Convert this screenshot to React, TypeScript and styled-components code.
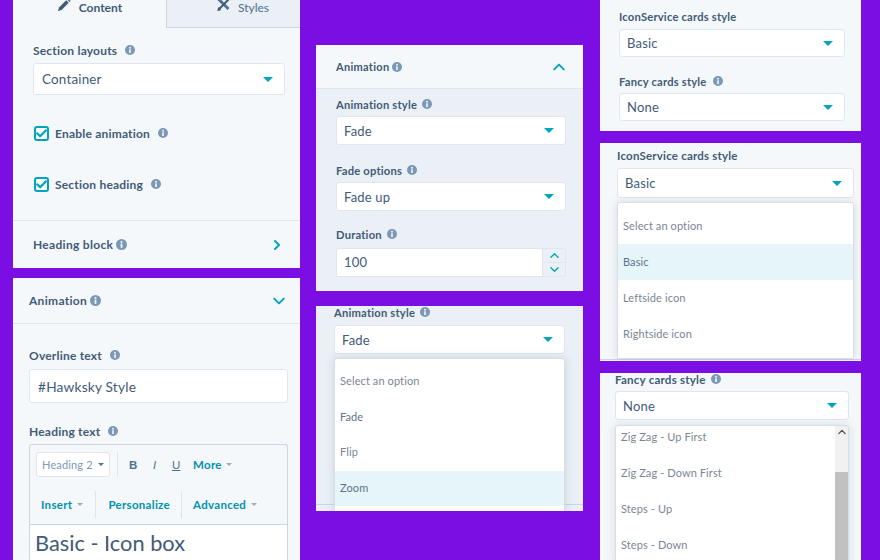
import React from "react";
import styled, { createGlobalStyle } from "styled-components";

const Global = createGlobalStyle`
  html, body { margin: 0; padding: 0; background: #7a0ee3; }
  body { font-family: "Lato", "Open Sans", sans-serif; color: #33475b; }
`;
const Page = styled.div`
  width: 880px; height: 560px; overflow: hidden; display: flex; padding-left: 13px;
  box-sizing: border-box; background: #7a0ee3;
`;
const Column = styled.div<{ $w: number; $ml?: number; $top?: number; $gap: number }>`
  width: ${p => p.$w}px; margin-left: ${p => p.$ml ?? 0}px; padding-top: ${p => p.$top ?? 0}px;
  display: flex; flex-direction: column; gap: ${p => p.$gap}px; flex: none;
`;
const Panel = styled.section<{ $h: number; $tint?: boolean; $rule?: number }>`
  height: ${p => p.$h}px; flex: none; overflow: hidden; box-sizing: border-box;
  background-color: ${p => (p.$tint ? "#eaf0f6" : "#f5f8fa")};
  ${p => (p.$rule ? `background-image: linear-gradient(#cbd6e2, #cbd6e2); background-repeat: no-repeat; background-size: 100% 1px; background-position: 0 ${p.$rule}px;` : "")}
`;
const Tabs = styled.div` display: flex; height: 28px; box-sizing: border-box; `;
const Tab = styled.div<{ $active?: boolean }>`
  flex: ${p => (p.$active ? "0 0 153px" : "1")}; box-sizing: border-box; display: flex; align-items: flex-start; justify-content: center;
  gap: 8px; padding-left: ${p => (p.$active ? 0 : 19)}px; font-size: 12px; line-height: 16px;
  font-weight: ${p => (p.$active ? 700 : 400)}; color: ${p => (p.$active ? "#425b76" : "#516f90")};
  background: ${p => (p.$active ? "#f5f8fa" : "#eaf0f6")};
  ${p => (p.$active ? "" : "border-left: 1px solid #cbd6e2; border-bottom: 1px solid #cbd6e2;")}
  svg { flex: none; }
`;
const Body = styled.div<{ $pt: number; $pl: number; $pr: number }>`
  padding: ${p => p.$pt}px ${p => p.$pr}px 0 ${p => p.$pl}px;
`;
const Label = styled.div<{ $mt?: number; $gap?: number; $size?: number }>`
  display: flex; align-items: center; gap: ${p => p.$gap ?? 8}px; height: 14px; margin-top: ${p => p.$mt ?? 0}px;
  font-size: ${p => p.$size ?? 12}px; font-weight: 700; color: #425b76; letter-spacing: 0.2px; white-space: nowrap;
`;
const InfoDot = styled.svg<{ $s?: number }>`
  width: ${p => p.$s ?? 10}px; height: ${p => p.$s ?? 10}px; flex: none;
`;
const Info = ({ s }: { s?: number }) => (
  <InfoDot $s={s} viewBox="0 0 10 10">
    <circle cx="5" cy="5" r="5" fill="#7c98b6" />
    <rect x="4.2" y="4.3" width="1.6" height="3.7" fill="#f5f8fa" />
    <circle cx="5" cy="2.8" r="0.95" fill="#f5f8fa" />
  </InfoDot>
);
const SelectBox = styled.div<{ $mt?: number; $h: number; $size?: number; $pl?: number }>`
  height: ${p => p.$h}px; margin-top: ${p => p.$mt ?? 6}px; box-sizing: border-box; display: flex; align-items: center;
  justify-content: space-between; background: #fff; border: 1px solid #dfe6ef; border-radius: 3px;
  padding: 0 11px 0 ${p => p.$pl ?? 7}px; font-size: ${p => p.$size ?? 13}px; color: #425b76; letter-spacing: 0.2px;
`;
const Caret = styled.span`
  width: 0; height: 0; border-left: 5px solid transparent; border-right: 5px solid transparent;
  border-top: 5px solid #00a4bd; flex: none;
`;
const CheckRow = styled.div<{ $mt: number }>`
  display: flex; align-items: center; margin-top: ${p => p.$mt}px; height: 16px; padding-left: 1px;
`;
const CheckBox = styled.span`
  width: 15px; height: 15px; box-sizing: border-box; border: 2px solid #00a4bd; border-radius: 3px; background: #fff;
  display: flex; align-items: center; justify-content: center; margin-right: 6px; flex: none;
`;
const Divider = styled.div<{ $mt?: number }>` height: 1px; background: #dfe3eb; margin-top: ${p => p.$mt ?? 0}px; `;
const Header = styled.div<{ $h: number; $pl: number; $pr: number; $line?: boolean }>`
  height: ${p => p.$h}px; box-sizing: border-box; display: flex; align-items: center; justify-content: space-between;
  padding: 0 ${p => p.$pr}px 0 ${p => p.$pl}px; background: #f5f8fa;
  ${p => (p.$line ? "border-bottom: 1px solid #dfe3eb;" : "")}
`;
const HeadTitle = styled.div<{ $size?: number }>`
  display: flex; align-items: center; gap: 3px; font-size: ${p => p.$size ?? 12}px; font-weight: 700; color: #425b76; letter-spacing: 0.3px;
`;
const Chevron = ({ dir, s = 10, w = 2, c = "#00a4bd" }: { dir: "up" | "down" | "right"; s?: number; w?: number; c?: string }) => {
  const d = dir === "up" ? "M1 7 L5 3 L9 7" : dir === "down" ? "M1 3 L5 7 L9 3" : "M3 1 L7 5 L3 9";
  return (
    <svg width={s} height={s} viewBox="0 0 10 10" fill="none">
      <path d={d} stroke={c} strokeWidth={w} strokeLinecap="round" strokeLinejoin="round" />
    </svg>
  );
};
const Editor = styled.div`
  margin-top: 6px; border: 1px solid #cbd6e2; border-bottom: none; background: #f5f8fa; border-radius: 3px 3px 0 0;
`;
const ToolRow = styled.div<{ $h: number; $pl: number }>`
  height: ${p => p.$h}px; box-sizing: border-box; display: flex; align-items: center; padding-left: ${p => p.$pl}px;
`;
const HeadingSelect = styled.div`
  width: 74px; height: 25px; box-sizing: border-box; background: #fff; border: 1px solid #dfe3eb; border-radius: 3px;
  display: flex; align-items: center; justify-content: space-between; padding: 0 5px 0 5px; font-size: 11px; color: #7c98b6; letter-spacing: .15px;
`;
const SmallCaret = styled.span<{ $c?: string; $ml?: number }>`
  width: 0; height: 0; border-left: 3px solid transparent; border-right: 3px solid transparent;
  border-top: 3px solid ${p => p.$c ?? "#99acc2"}; margin-left: ${p => p.$ml ?? 0}px; flex: none;
`;
const ToolSep = styled.span<{ $ml: number; $mr: number; $h: number }>`
  width: 1px; height: ${p => p.$h}px; background: #dfe3eb; margin: 0 ${p => p.$mr}px 0 ${p => p.$ml}px; flex: none;
`;
const FormatBtn = styled.span<{ $w: number; $i?: boolean; $u?: boolean; $b?: boolean }>`
  width: ${p => p.$w}px; font-size: 11.5px; color: #516f90; font-weight: ${p => (p.$b ? 900 : 400)};
  font-style: ${p => (p.$i ? "italic" : "normal")}; text-decoration: ${p => (p.$u ? "underline" : "none")}; font-family: "Liberation Sans", sans-serif;
`;
const ToolLink = styled.span`
  font-size: 11.5px; font-weight: 700; color: #0091ae; letter-spacing: 0.3px; white-space: nowrap;
`;
const EditorContent = styled.div`
  background: #fff; border-top: 1px solid #cbd6e2; height: 40px; padding: 3px 0 0 5px; font-size: 21.8px; line-height: 30px;
  font-weight: 400; color: #425b76; white-space: nowrap;
`;
const Stepper = styled.div`
  display: flex; margin-top: 7px; height: 29px; border: 1px solid #dfe6ef; border-radius: 3px; overflow: hidden; box-sizing: border-box;
`;
const StepperValue = styled.div`
  flex: 1; background: #fff; font-size: 13px; color: #425b76; padding: 0 0 1px 7px; display: flex; align-items: center; letter-spacing: .2px;
`;
const StepButtons = styled.div`
  width: 22px; display: flex; flex-direction: column; background: #eaf0f6; border-left: 1px solid #dfe6ef;
`;
const StepBtn = styled.div`
  flex: 1; display: flex; align-items: center; justify-content: center;
  & + & { border-top: 1px solid #dfe6ef; }
`;
const Menu = styled.div<{ $h: number; $mt: number; $pt?: number }>`
  margin-top: ${p => p.$mt}px; height: ${p => p.$h}px; box-sizing: border-box; background: #fff; padding-top: ${p => p.$pt ?? 0}px;
  border: 1px solid #d5deea; border-radius: 3px 3px 0 0; box-shadow: 0 0 10px rgba(66, 91, 118, .18); overflow: hidden; display: flex;
`;
const OptionList = styled.div<{ $scroll?: number }>` flex: 1; min-width: 0; margin-top: ${p => -(p.$scroll ?? 0)}px; `;
const Option = styled.div<{ $h: number; $active?: boolean; $muted?: boolean }>`
  height: ${p => p.$h}px; box-sizing: border-box; display: flex; align-items: center; padding: 0 0 2px 5px; font-size: 11px; letter-spacing: .1px;
  color: ${p => (p.$muted ? "#7a8694" : "#5f7288")}; background: ${p => (p.$active ? "#e5f5f8" : "transparent")};
`;
const ScrollBar = styled.div` width: 13px; flex: none; background: #c1c1c1; display: flex; flex-direction: column; `;
const ScrollTrack = styled.div`
  height: 46px; background: #f1f1f1; display: flex; justify-content: center; padding-top: 2px; box-sizing: border-box;
`;

const Pencil = () => (
  <svg width="14" height="14" viewBox="0 0 14 14" style={{ marginTop: -2 }}>
    <path d="M1 13 L2 9.4 L9.2 2.2 L11.8 4.8 L4.6 12 Z" fill="#425b76" />
    <path d="M10 1.4 L11 .4 L13.6 3 L12.6 4 Z" fill="#425b76" />
  </svg>
);
const Tools = () => (
  <svg width="13" height="13" viewBox="0 0 14 14" style={{ marginTop: -2 }}>
    <path d="M1 .5 L2.6 0 L13.4 10.8 L11.4 13 L.6 2.4 Z" fill="#516f90" />
    <path d="M12.4 0 L14 1.6 L4.4 11.2 L3.6 13.4 L.4 14 L1 10.6 L3 9.6 Z" fill="#425b76" />
  </svg>
);
const Tick = () => (
  <svg width="11" height="9" viewBox="0 0 11 9" fill="none">
    <path d="M1.2 4.4 L4.2 7.2 L9.8 1.4" stroke="#00a4bd" strokeWidth="2.2" strokeLinecap="round" strokeLinejoin="round" />
  </svg>
);

export default function App() {
  return (
    <>
      <Global />
      <Page>
        <Column $w={287} $gap={10}>
          <Panel $h={268}>
            <Tabs>
              <Tab $active><Pencil />Content</Tab>
              <Tab><Tools />Styles</Tab>
            </Tabs>
            <Body $pt={15} $pl={20} $pr={15}>
              <Label>Section layouts <Info /></Label>
              <SelectBox $h={32} $size={13.4} $pl={8}>Container <Caret /></SelectBox>
              <CheckRow $mt={30}><CheckBox><Tick /></CheckBox><Label>Enable animation <Info /></Label></CheckRow>
              <CheckRow $mt={35}><CheckBox><Tick /></CheckBox><Label>Section heading <Info /></Label></CheckRow>
            </Body>
            <Divider $mt={28} />
            <Header $h={47} $pl={20} $pr={18}>
              <HeadTitle>Heading block <Info s={11} /></HeadTitle>
              <Chevron dir="right" />
            </Header>
          </Panel>
          <Panel $h={290}>
            <Header $h={46} $pl={16} $pr={15} $line>
              <HeadTitle>Animation <Info s={11} /></HeadTitle>
              <Chevron dir="down" s={12} w={1.6} />
            </Header>
            <Body $pt={24} $pl={16} $pr={12}>
              <Label>Overline text <Info /></Label>
              <SelectBox $h={34} $mt={7} $size={13.7} $pl={8}>#Hawksky Style</SelectBox>
              <Label $mt={21}>Heading text <Info /></Label>
              <Editor>
                <ToolRow $h={39} $pl={6}>
                  <HeadingSelect>Heading 2 <SmallCaret $c="#516f90" /></HeadingSelect>
                  <ToolSep $ml={7} $mr={11} $h={25} />
                  <FormatBtn $w={24} $b>B</FormatBtn>
                  <FormatBtn $w={19} $i>I</FormatBtn>
                  <FormatBtn $w={21} $u>U</FormatBtn>
                  <ToolLink>More</ToolLink>
                  <SmallCaret $ml={4} />
                </ToolRow>
                <ToolRow $h={40} $pl={11}>
                  <ToolLink>Insert</ToolLink>
                  <SmallCaret $ml={5} />
                  <ToolSep $ml={12} $mr={12} $h={27} />
                  <ToolLink>Personalize</ToolLink>
                  <ToolSep $ml={11} $mr={11} $h={27} />
                  <ToolLink>Advanced</ToolLink>
                  <SmallCaret $ml={5} />
                </ToolRow>
                <EditorContent>Basic - Icon box</EditorContent>
              </Editor>
            </Body>
          </Panel>
        </Column>

        <Column $w={267} $ml={16} $top={45} $gap={15}>
          <Panel $h={246} $tint>
            <Header $h={44} $pl={20} $pr={18} $line>
              <HeadTitle $size={11}>Animation <Info /></HeadTitle>
              <Chevron dir="up" s={12} w={1.6} />
            </Header>
            <Body $pt={8} $pl={20} $pr={17}>
              <Label $size={11.2} $gap={5}>Animation style <Info /></Label>
              <SelectBox $h={29} $mt={5}>Fade <Caret /></SelectBox>
              <Label $mt={18} $size={11.2} $gap={5}>Fade options <Info /></Label>
              <SelectBox $h={29} $mt={5}>Fade up <Caret /></SelectBox>
              <Label $mt={16} $size={11.2} $gap={5}>Duration <Info /></Label>
              <Stepper>
                <StepperValue>100</StepperValue>
                <StepButtons>
                  <StepBtn><Chevron dir="up" s={9} w={1.5} /></StepBtn>
                  <StepBtn><Chevron dir="down" s={9} w={1.5} /></StepBtn>
                </StepButtons>
              </Stepper>
            </Body>
          </Panel>
          <Panel $h={205} $tint $rule={198}>
            <Body $pt={0} $pl={18} $pr={18}>
              <Label $mt={-1} $size={11.2} $gap={5}>Animation style <Info /></Label>
              <SelectBox $h={29} $mt={6}>Fade <Caret /></SelectBox>
              <Menu $h={160} $mt={4} $pt={5}>
                <OptionList>
                  <Option $h={35.5} $muted>Select an option</Option>
                  <Option $h={35.5}>Fade</Option>
                  <Option $h={35.5} $muted>Flip</Option>
                  <Option $h={35.5} $active>Zoom</Option>
                </OptionList>
              </Menu>
            </Body>
          </Panel>
        </Column>

        <Column $w={261} $ml={17} $gap={12}>
          <Panel $h={131}>
            <Body $pt={9} $pl={19} $pr={16}>
              <Label $size={11.2}>IconService cards style</Label>
              <SelectBox $h={28} $mt={6}>Basic <Caret /></SelectBox>
              <Label $mt={17} $size={11.2} $gap={6}>Fancy cards style <Info /></Label>
              <SelectBox $h={28} $mt={5}>None <Caret /></SelectBox>
            </Body>
          </Panel>
          <Panel $h={218} $rule={216}>
            <Body $pt={5} $pl={17} $pr={7}>
              <Label $size={11.5}>IconService cards style</Label>
              <SelectBox $h={30} $mt={6}>Basic <Caret /></SelectBox>
              <Menu $h={157} $mt={4} $pt={5}>
                <OptionList>
                  <Option $h={36} $muted>Select an option</Option>
                  <Option $h={36} $active>Basic</Option>
                  <Option $h={36} $muted>Leftside icon</Option>
                  <Option $h={36} $muted>Rightside icon</Option>
                </OptionList>
              </Menu>
            </Body>
          </Panel>
          <Panel $h={187}>
            <Body $pt={0} $pl={15} $pr={12}>
              <Label $mt={-1} $size={11.6} $gap={5}>Fancy cards style <Info /></Label>
              <SelectBox $h={29} $mt={5}>None <Caret /></SelectBox>
              <Menu $h={140} $mt={5}>
                <OptionList $scroll={7}>
                  <Option $h={36} $muted>Zig Zag - Up First</Option>
                  <Option $h={36} $muted>Zig Zag - Down First</Option>
                  <Option $h={36} $muted>Steps - Up</Option>
                  <Option $h={36} $muted>Steps - Down</Option>
                </OptionList>
                <ScrollBar>
                  <ScrollTrack><Chevron dir="up" s={8} w={1.6} c="#505050" /></ScrollTrack>
                </ScrollBar>
              </Menu>
            </Body>
          </Panel>
        </Column>
      </Page>
    </>
  );
}
